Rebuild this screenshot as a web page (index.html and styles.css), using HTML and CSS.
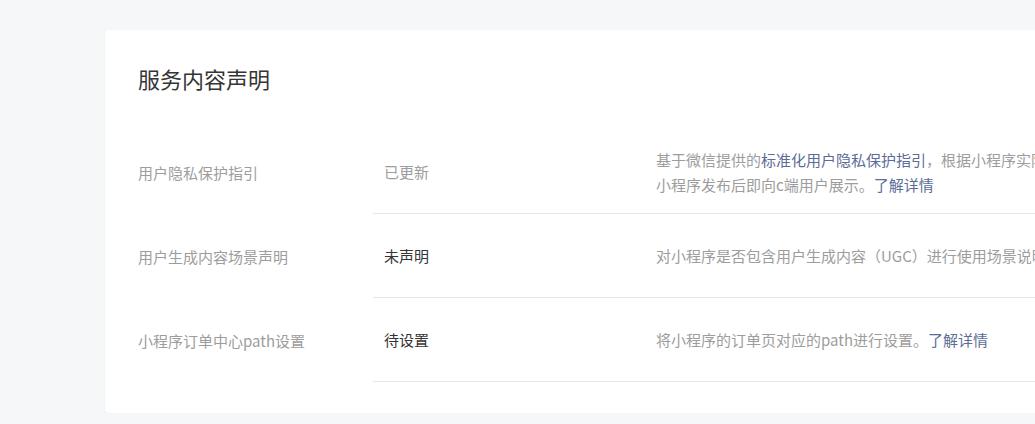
FILE: index.html
```html
<!DOCTYPE html>
<html>
<head>
  <meta charset="utf-8">
  <link rel="stylesheet" href="styles.css">
</head>
<body>
  <div class="page">
    <div class="card">
      <h2 class="card-title">服务内容声明</h2>

      <div class="decl-list">
        <div class="decl-row">
          <div class="decl-label">用户隐私保护指引</div>
          <div class="decl-body">
            <div class="decl-status done">已更新</div>
            <div class="decl-desc">
              基于微信提供的<a class="link" href="#">标准化用户隐私保护指引</a>，根据小程序实际情况更新用户隐私保护指引，更新后的指引将于小程序发布后即向c端用户展示。<a class="link" href="#">了解详情</a>
            </div>
          </div>
        </div>

        <div class="decl-row">
          <div class="decl-label">用户生成内容场景声明</div>
          <div class="decl-body">
            <div class="decl-status">未声明</div>
            <div class="decl-desc">
              对小程序是否包含用户生成内容（UGC）进行使用场景说明。<a class="link" href="#">了解详情</a>
            </div>
          </div>
        </div>

        <div class="decl-row">
          <div class="decl-label">小程序订单中心path设置</div>
          <div class="decl-body">
            <div class="decl-status">待设置</div>
            <div class="decl-desc">
              将小程序的订单页对应的path进行设置。<a class="link" href="#">了解详情</a>
            </div>
          </div>
        </div>
      </div>
    </div>
  </div>
</body>
</html>
```

FILE: styles.css
```css
html, body {
  overflow: hidden;
}

body {
  margin: 0;
  background: #f6f7f9;
  font-family: "Noto Sans CJK SC", "Noto Sans", sans-serif;
  color: #353535;
}

.page {
  padding: 30px 0 0 105px;
}

.card {
  width: 1300px;
  background: #fff;
  border-radius: 4px;
  box-shadow: 0 1px 2px rgba(0, 0, 0, 0.06);
  padding: 33px 0 31px 33px;
  box-sizing: border-box;
}

.card-title {
  margin: 0;
  font-size: 22px;
  font-weight: 400;
  line-height: 30px;
  color: #353535;
}

.decl-list {
  margin-top: 37px;
}

.decl-row {
  display: flex;
  align-items: stretch;
}

.decl-label {
  width: 235px;
  flex-shrink: 0;
  display: flex;
  align-items: center;
  font-size: 15px;
  color: #9d9d9d;
}

.decl-body {
  flex: 1;
  display: flex;
  align-items: center;
  height: 83px;
  border-bottom: 1px solid #e7e7eb;
}

.decl-status {
  width: 261px;
  flex-shrink: 0;
  padding-left: 11px;
  font-size: 15px;
  color: #353535;
}

.decl-status.done {
  color: #9d9d9d;
}

.decl-desc {
  width: 710px;
  padding-left: 11px;
  font-size: 15px;
  line-height: 25px;
  color: #9d9d9d;
}

.link {
  color: #5b6c96;
  text-decoration: none;
}
```
